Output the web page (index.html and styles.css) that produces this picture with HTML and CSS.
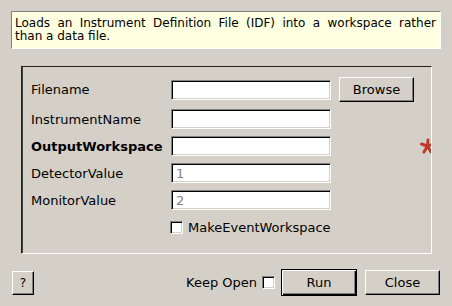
FILE: index.html
```html
<!DOCTYPE html>
<html lang="en">
<head>
    <meta charset="UTF-8">
    <meta name="viewport" content="width=device-width, initial-scale=1.0">
    <title>LoadEmptyInstrument</title>
    <link rel="stylesheet" href="styles.css">
</head>
<body>
    <div class="dialog">
        <div class="tip">
            <span class="tip-line">Loads an Instrument Definition File (IDF) into a workspace rather</span>
            <span>than a data file.</span>
        </div>

        <div class="group">
            <div class="form">
                <label class="name">Filename</label>
                <input class="field" type="text">
                <button class="btn browse">Browse</button>
                <span></span>

                <label class="name">InstrumentName</label>
                <input class="field" type="text">
                <span></span>
                <span></span>

                <label class="name bold">OutputWorkspace</label>
                <input class="field" type="text">
                <span></span>
                <svg class="star" width="14" height="16" viewBox="0 0 14 16">
                    <g stroke="#c0392b" stroke-width="3" stroke-linecap="round">
                        <line x1="7.5" y1="8" x2="8" y2="2"/>
                        <line x1="7.5" y1="8" x2="1.5" y2="6"/>
                        <line x1="7.5" y1="8" x2="4" y2="14"/>
                        <line x1="7.5" y1="8" x2="11" y2="14"/>
                        <line x1="7.5" y1="8" x2="13.5" y2="6"/>
                    </g>
                </svg>

                <label class="name">DetectorValue</label>
                <input class="field" type="text" value="1" disabled>
                <span></span>
                <span></span>

                <label class="name">MonitorValue</label>
                <input class="field" type="text" value="2" disabled>
                <span></span>
                <span></span>

                <span></span>
                <label class="check"><span class="box"></span>MakeEventWorkspace</label>
                <span></span>
                <span></span>
            </div>
        </div>

        <div class="actions">
            <button class="btn help">?</button>
            <label class="keep">Keep Open <span class="box"></span></label>
            <button class="btn run">Run</button>
            <button class="btn close">Close</button>
        </div>
    </div>
</body>
</html>
```

FILE: styles.css
```css
body {
    margin: 0;
    width: 452px;
    height: 306px;
    background-color: #d4d0c8;
    font-family: "DejaVu Sans", sans-serif;
    font-size: 13px;
    color: #000;
    overflow: hidden;
}
.dialog {
    display: flex;
    flex-direction: column;
    padding: 11px 11px 0 11px;
}
.tip {
    display: flex;
    flex-direction: column;
    background-color: #ffffe1;
    border: 1px solid;
    border-color: #808080 #fff #fff #808080;
    padding: 5px 4px 5px 3px;
    font-size: 12px;
    line-height: 13px;
}
.tip-line {
    text-align: justify;
    text-align-last: justify;
}
.group {
    margin: 17px 9px 0 10px;
    border: 1px solid;
    border-color: #202020 #fff #fff #202020;
    box-shadow: inset 1px 0 0 #404040;
    padding: 10px 0 16px 9px;
    overflow: hidden;
}
.form {
    display: grid;
    grid-template-columns: 132px 160px 75px 14px;
    grid-template-rows: 25px repeat(5, 20px);
    column-gap: 8px;
    row-gap: 7px;
    align-items: center;
}
.name {
    white-space: nowrap;
}
.bold {
    font-weight: bold;
}
.field {
    box-sizing: border-box;
    width: 160px;
    height: 20px;
    margin: 0;
    padding: 0 3px 0 4px;
    border: 1px solid;
    border-color: #808080 #fff #fff #808080;
    box-shadow: inset 1px 1px 0 #000, inset -1px -1px 0 #d4d0c8;
    background-color: #fff;
    font-family: "DejaVu Sans", sans-serif;
    font-size: 13px;
    outline: none;
}
.field:disabled {
    color: #808080;
}
.btn {
    box-sizing: border-box;
    margin: 0;
    padding: 0;
    border: 1px solid;
    border-color: #fff #000 #000 #fff;
    box-shadow: inset -1px -1px 0 #808080;
    background-color: #d4d0c8;
    font-family: "DejaVu Sans", sans-serif;
    font-size: 13px;
    color: #000;
}
.browse {
    width: 75px;
    height: 25px;
}
.star {
    display: block;
    margin-left: -2px;
}
.check {
    display: flex;
    align-items: center;
    gap: 5px;
    margin-left: -1px;
    white-space: nowrap;
}
.box {
    box-sizing: border-box;
    display: inline-block;
    width: 13px;
    height: 13px;
    border: 1px solid;
    border-color: #808080 #fff #fff #808080;
    box-shadow: inset 1px 1px 0 #000, inset -1px -1px 0 #d4d0c8;
    background-color: #fff;
}
.actions {
    display: flex;
    align-items: center;
    height: 27px;
    margin: 15px 1px 0 1px;
}
.help {
    width: 22px;
    height: 24px;
    font-size: 12px;
}
.keep {
    margin-left: auto;
    display: flex;
    align-items: center;
    gap: 5px;
    margin-right: 6px;
}
.run {
    width: 76px;
    height: 27px;
    border: 1px solid #000;
    box-shadow: inset 1px 1px 0 #fff, inset -1px -1px 0 #000, inset -2px -2px 0 #808080;
    margin-right: 8px;
}
.close {
    width: 75px;
    height: 25px;
}
```
